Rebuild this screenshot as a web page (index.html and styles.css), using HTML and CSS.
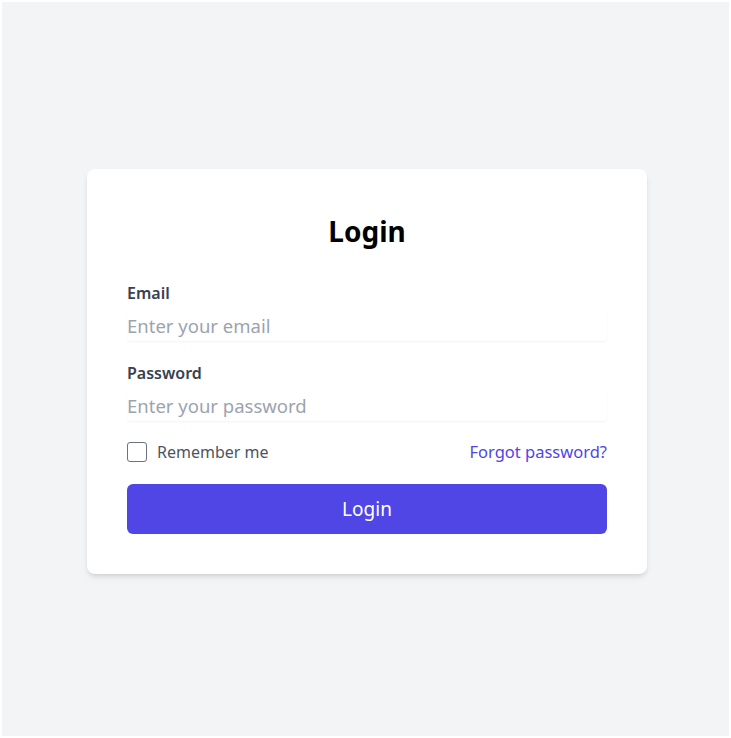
FILE: index.html
```html
<!DOCTYPE html>
<html lang="en">
  <head>
    <meta charset="UTF-8" />
    <meta name="viewport" content="width=device-width, initial-scale=1.0" />
    <title>Login</title>
    <link rel="stylesheet" href="styles.css">
  </head>
  <body>
    <section class="page">
      <form action="#" class="card">
        <h2 class="title">Login</h2>
        <div class="field">
          <label for="email" class="label">Email</label>
          <input type="email" id="email" class="input" placeholder="Enter your email" />
        </div>
        <div class="field">
          <label for="password" class="label">Password</label>
          <input type="password" id="password" class="input" placeholder="Enter your password" />
        </div>
        <div class="row">
          <label class="remember">
            <input type="checkbox" class="check" />
            <span>Remember me</span>
          </label>
          <a href="#" class="forgot">Forgot password?</a>
        </div>
        <button type="submit" class="submit">Login</button>
      </form>
    </section>
  </body>
</html>
```

FILE: styles.css
```css
* {
  margin: 0;
  padding: 0;
  box-sizing: border-box;
}
body {
  background-color: white;
  font-family: "Noto Sans", "Open Sans", sans-serif;
}
.page {
  margin: 2px;
  padding-left: 3px;
  height: 734px;
  background-color: #f3f4f6;
  display: flex;
  align-items: center;
  justify-content: center;
}
.card {
  width: 560px;
  background-color: white;
  border-radius: 8px;
  box-shadow: 0 4px 6px -1px rgba(0, 0, 0, 0.1), 0 2px 4px -2px rgba(0, 0, 0, 0.1);
  padding: 40px;
  margin-top: 4px;
}
.title {
  text-align: center;
  font-size: 28px;
  font-weight: 700;
  color: black;
  line-height: 44px;
  margin-bottom: 28px;
}
.field {
  margin-bottom: 20px;
}
.label {
  display: block;
  font-size: 16px;
  font-weight: 600;
  color: #374151;
  line-height: 24px;
  margin-bottom: 6px;
}
.input {
  display: block;
  width: 100%;
  height: 30px;
  border: 0;
  border-radius: 4px;
  font-family: inherit;
  font-size: 18.5px;
  color: #111827;
  box-shadow: 0 1px 2px 0 rgba(0, 0, 0, 0.05);
}
.input::placeholder {
  color: #9ca3af;
}
.input:focus {
  outline: 0;
}
.row {
  display: flex;
  justify-content: space-between;
  align-items: center;
  height: 24px;
  margin-top: -1px;
}
.remember {
  display: flex;
  align-items: center;
  gap: 10px;
  font-size: 16px;
  color: #4b5563;
}
.check {
  appearance: none;
  width: 20px;
  height: 20px;
  border: 1.5px solid #6b7280;
  border-radius: 3px;
  background-color: white;
}
.forgot {
  font-size: 16.5px;
  color: #4f46e5;
  text-decoration: none;
}
.submit {
  display: block;
  margin-top: 20px;
  width: 100%;
  height: 50px;
  border: 0;
  border-radius: 6px;
  background-color: #4f46e5;
  color: white;
  font-family: inherit;
  font-size: 19px;
}
```
